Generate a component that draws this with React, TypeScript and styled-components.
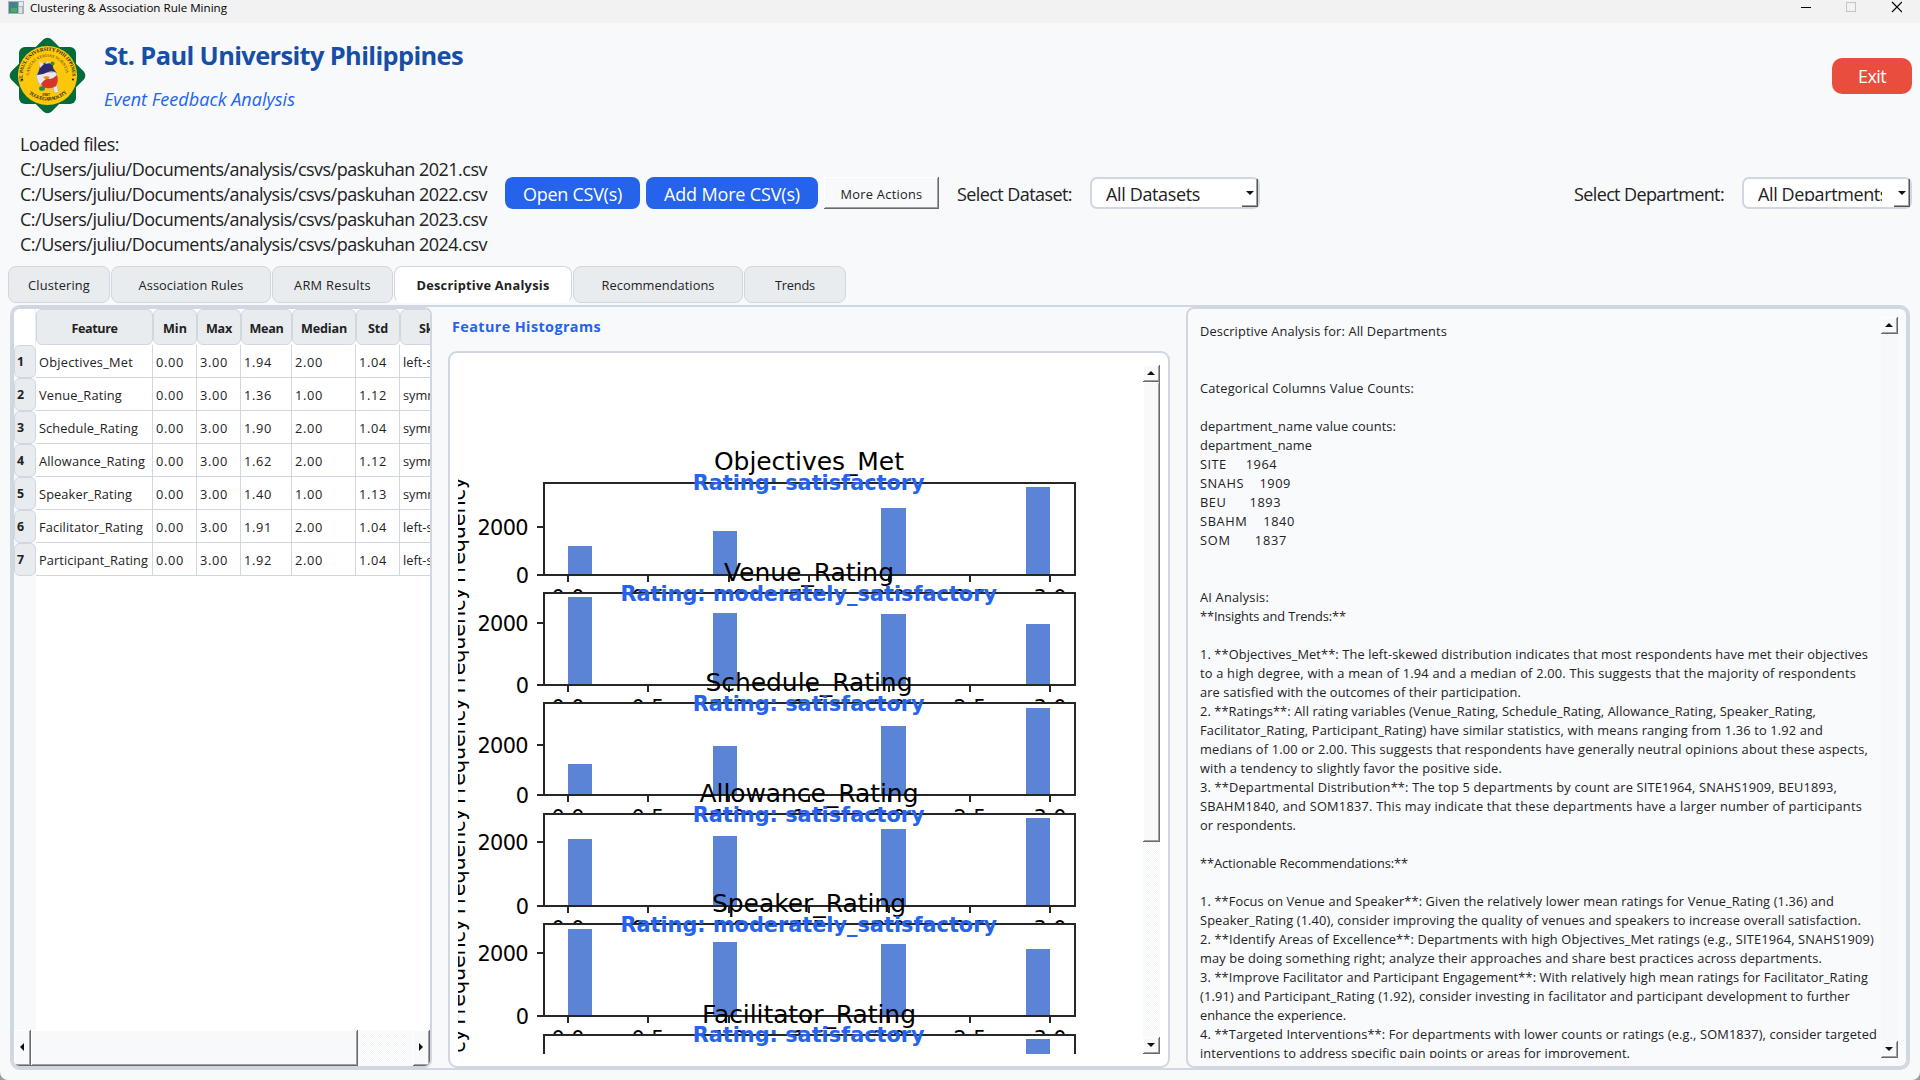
import React, { useLayoutEffect, useRef, useState } from 'react';
import styled, { createGlobalStyle, css } from 'styled-components';

const line = '#d0d7e0';
const ink = '#222222';
const surface = '#f7f9fb';

const Global = createGlobalStyle`
  * { box-sizing: border-box; }
  html, body { margin: 0; padding: 0; background: #9a9c9f; }
  body { font-family: 'Open Sans', 'Noto Sans', sans-serif; color: ${ink}; overflow: hidden; }
`;

/* ---------- text that keeps a fixed run length ---------- */

const Run = styled.span`
  display: inline-block;
  white-space: pre;
`;

function Fit({ w, children }: { w: number; children: string }) {
  const ref = useRef<HTMLSpanElement>(null);
  const [gap, setGap] = useState(0);
  useLayoutEffect(() => {
    const natural = ref.current!.getBoundingClientRect().width;
    setGap((w - natural) / children.length);
  }, [w, children]);
  return <Run ref={ref} style={{ letterSpacing: `${gap}px` }}>{children}</Run>;
}

/* ---------- window chrome ---------- */

const Window = styled.div`
  width: 1920px;
  height: 1080px;
  display: flex;
  flex-direction: column;
  background: ${surface};
  border-radius: 0 0 8px 8px;
  overflow: hidden;
`;

const TitleBar = styled.div`
  height: 23px;
  flex: none;
  display: flex;
  align-items: flex-start;
  background: #f2f2f2;
  color: #000;
  font-size: 11.6px;
  line-height: 16px;
  padding: 0 18px 0 8px;
`;

const TitleText = styled.div`
  margin: 0 auto 0 6px;
`;

const AppIcon = styled.svg`
  width: 16px;
  height: 13px;
  margin-top: 1px;
`;

const WindowButtons = styled.svg`
  width: 102px;
  height: 14px;
`;

/* ---------- heading ---------- */

const Header = styled.header`
  height: 108px;
  flex: none;
  display: flex;
  padding: 14px 8px 0 9px;
`;

const Logo = styled.svg`
  width: 77px;
  height: 77px;
`;

const Headings = styled.div`
  margin-left: 18px;
  display: flex;
  flex-direction: column;
`;

const Title = styled.h1`
  margin: 1px 0 0;
  font-size: 25.4px;
  line-height: 35px;
  font-weight: 700;
  color: #174ea6;
`;

const Subtitle = styled.div`
  margin-top: 14px;
  font-size: 18px;
  line-height: 25px;
  font-style: italic;
  color: #2563eb;
`;

const ExitButton = styled.button`
  margin: 21px 0 0 auto;
  width: 80px;
  height: 36px;
  border: 0;
  border-radius: 10px;
  background: #e94d3d;
  color: #fff;
  font: 18px/35px 'Open Sans', sans-serif;
  padding: 1px 0 0;
`;

/* ---------- toolbar ---------- */

const Toolbar = styled.div`
  height: 125px;
  flex: none;
  display: flex;
  align-items: center;
  padding: 0 8px 0 20px;
  font-size: 18px;
  line-height: 25px;
`;

const Files = styled.div`
  width: 485px;
  padding-top: 1px;
  div { height: 25px; }
`;

const PrimaryButton = styled.button<{ $w: number }>`
  width: ${p => p.$w}px;
  height: 32px;
  margin: 0 6px 1px 0;
  border: 0;
  border-radius: 8px;
  background: #2563eb;
  color: #fff;
  font: 18px/30px 'Open Sans', sans-serif;
  padding: 2px 0 0;
`;

const bevel = css`
  border: 0;
  background: ${surface};
  box-shadow: inset -1px -1px #696969, inset 1px 1px #fff, inset -2px -2px #a0a0a0;
`;

const MenuButton = styled.button`
  ${bevel}
  width: 115px;
  height: 32px;
  margin: 0 18px 1px 0;
  color: ${ink};
  font: 12.8px/30px 'Open Sans', sans-serif;
  padding: 1px 0 0;
`;

const Label = styled.div<{ $right?: boolean }>`
  margin-right: 18px;
  margin-left: ${p => (p.$right ? 'auto' : '0')};
  padding-top: 2px;
`;

const Combo = styled.div`
  width: 170px;
  height: 32px;
  margin-bottom: 1px;
  display: flex;
  border: 2px solid ${line};
  border-radius: 7px;
  background: #fff;
`;

const ComboText = styled.div`
  width: 124px;
  height: 22px;
  margin: 0 auto 0 14px;
  overflow: hidden;
  padding-top: 3px;
  white-space: nowrap;
`;

const TallComboText = styled(ComboText)`
  height: 28px;
`;

const Arrow = styled.i<{ $dir: 'up' | 'down' | 'left' | 'right' }>`
  width: 0;
  height: 0;
  border: 4px solid transparent;
  ${p => p.$dir === 'up' && 'border-top: 0; border-bottom-color: #111;'}
  ${p => p.$dir === 'down' && 'border-bottom: 0; border-top-color: #111;'}
  ${p => p.$dir === 'left' && 'border-left: 0; border-right-color: #111;'}
  ${p => p.$dir === 'right' && 'border-right: 0; border-left-color: #111;'}
`;

const ComboDrop = styled.div`
  width: 16px;
  height: 28px;
  display: flex;
  align-items: center;
  justify-content: center;
  box-shadow: inset -1px -1px #555, inset -2px -2px #a0a0a0;
`;

/* ---------- tabs ---------- */

const Tabs = styled.nav`
  height: 49px;
  flex: none;
  display: flex;
  gap: 1px;
  padding: 10px 0 0 8px;
`;

const Tab = styled.div<{ $w: number; $active?: boolean }>`
  width: ${p => p.$w}px;
  height: 37px;
  border: 1px solid ${line};
  border-radius: 8px;
  background: #e9ecef;
  font-size: 12.8px;
  line-height: 37px;
  text-align: center;
  ${p => p.$active && 'background: #fff; font-weight: 700; border-bottom-color: #fff;'}
`;

/* ---------- panes ---------- */

const Pane = styled.main`
  width: 1900px;
  height: 765px;
  flex: none;
  margin-left: 10px;
  display: flex;
  border: 2px solid ${line};
  border-radius: 10px;
`;

const TablePanel = styled.section`
  width: 420px;
  height: 761px;
  display: flex;
  flex-direction: column;
  border: 2px solid ${line};
  border-radius: 8px;
  overflow: hidden;
`;

const TableBody = styled.div`
  flex: 1;
  display: flex;
  flex-direction: column;
  overflow: hidden;
  background: linear-gradient(to right, ${surface} 22px, #fff 22px);
`;

const HeadRow = styled.div`
  display: flex;
  flex: none;
  height: 36px;
`;

const Corner = styled.div`
  width: 22px;
  flex: none;
  background: #fff;
  border-right: 1px solid #e9ecef;
`;

const HeadCell = styled.div<{ $w: number }>`
  width: ${p => p.$w}px;
  flex: none;
  border: 1px solid ${line};
  border-radius: 6px;
  background: #e9ecef;
  font-weight: 700;
  font-size: 12.6px;
  line-height: 37px;
  text-align: center;
`;

const Row = styled.div`
  display: flex;
  flex: none;
  height: 33px;
  font-size: 12.8px;
  line-height: 34px;
`;

const RowHead = styled.div`
  width: 22px;
  flex: none;
  border: 1px solid ${line};
  border-radius: 6px;
  background: #e9ecef;
  font-weight: 700;
  font-size: 12.4px;
  padding-left: 2px;
  line-height: 32px;
`;

const Cell = styled.div<{ $w: number }>`
  width: ${p => p.$w}px;
  flex: none;
  padding-left: 3px;
  border-right: 1px solid ${line};
  border-bottom: 1px solid ${line};
  background: #fff;
  white-space: nowrap;
`;

const hatch = css`
  background: repeating-conic-gradient(#f3f6f9 0 25%, #fff 0 50%) 0 0 / 2px 2px;
`;

const HBar = styled.div`
  height: 36px;
  flex: none;
  display: flex;
  ${hatch}
`;

const BarButton = styled.div<{ $w: number; $h: number }>`
  ${bevel}
  width: ${p => p.$w}px;
  height: ${p => p.$h}px;
  flex: none;
  display: flex;
  align-items: center;
  justify-content: center;
  padding: 0 2px 2px 0;
`;

const Spacer = styled.div`
  flex: 1;
`;

const ChartPanel = styled.section`
  width: 722px;
  margin-left: 16px;
  display: flex;
  flex-direction: column;
`;

const ChartHeading = styled.h2`
  margin: 0;
  height: 44px;
  padding: 6px 0 0 4px;
  font-size: 14.4px;
  line-height: 28px;
  font-weight: 700;
  color: #2563eb;
`;

const ChartFrame = styled.div`
  height: 717px;
  display: flex;
  border: 2px solid ${line};
  border-radius: 9px;
  background: #fff;
  padding: 12px 8px 12px 8px;
`;

const Plot = styled.svg`
  width: 685px;
  height: 689px;
  font-family: 'DejaVu Sans', sans-serif;
  flex: none;
`;

const VBar = styled.div<{ $plain?: boolean }>`
  width: 17px;
  flex: none;
  display: flex;
  flex-direction: column;
  ${p => (p.$plain ? 'background: #f7f8fb;' : hatch)}
`;

const ReportPanel = styled.section`
  width: 722px;
  height: 761px;
  margin-left: 16px;
  display: flex;
  border: 2px solid ${line};
  border-radius: 8px;
  background: #f9fafc;
  padding: 8px 8px;
`;

const Report = styled.div`
  width: 685px;
  height: 741px;
  overflow: hidden;
  padding: 5px 0 0 4px;
  font-size: 12.8px;
`;

const ReportLine = styled.div`
  height: 19px;
  line-height: 19px;
`;

/* ---------- data ---------- */

const files = ['2021', '2022', '2023', '2024'];

const tabs: [string, number, number, boolean?][] = [
  ['Clustering', 102, 62],
  ['Association Rules', 160, 105],
  ['ARM Results', 121, 77],
  ['Descriptive Analysis', 178, 133, true],
  ['Recommendations', 170, 113],
  ['Trends', 102, 40],
];

const columns: [string, number, number][] = [
  ['Feature', 117, 46], ['Min', 44, 24], ['Max', 44, 26], ['Mean', 51, 34],
  ['Median', 64, 46], ['Std', 44, 20], ['Skewness', 98, 60],
];

const rows: [string, number, string, string, string, string][] = [
  ['Objectives_Met', 94, '1.94', '2.00', '1.04', 'left-skewed'],
  ['Venue_Rating', 83, '1.36', '1.00', '1.12', 'symmetric'],
  ['Schedule_Rating', 99, '1.90', '2.00', '1.04', 'symmetric'],
  ['Allowance_Rating', 106, '1.62', '2.00', '1.12', 'symmetric'],
  ['Speaker_Rating', 93, '1.40', '1.00', '1.13', 'symmetric'],
  ['Facilitator_Rating', 104, '1.91', '2.00', '1.04', 'left-skewed'],
  ['Participant_Rating', 109, '1.92', '2.00', '1.04', 'left-skewed'],
];

type Axes = { name: string; w: number; rating: string; top: number; tick: number; bars: number[] };
const axes: Axes[] = [
  { name: 'Objectives_Met', w: 188, rating: 'satisfactory', top: 483, tick: 527, bars: [546, 531, 508, 487] },
  { name: 'Venue_Rating', w: 168, rating: 'moderately_satisfactory', top: 593, tick: 623, bars: [597, 613, 614, 624] },
  { name: 'Schedule_Rating', w: 205, rating: 'satisfactory', top: 703, tick: 745, bars: [764, 746, 726, 708] },
  { name: 'Allowance_Rating', w: 217, rating: 'satisfactory', top: 814, tick: 842, bars: [839, 836, 829, 818] },
  { name: 'Speaker_Rating', w: 192, rating: 'moderately_satisfactory', top: 924, tick: 953, bars: [929, 942, 944, 949] },
  { name: 'Facilitator_Rating', w: 212, rating: 'satisfactory', top: 1035, tick: 1080, bars: [1097, 1080, 1060, 1039] },
];
const firstTop = 483;
const pitch = 110.45;
const barX: [number, number][] = [[568, 24], [713, 24], [881, 25], [1026, 24]];
const xTicks: [string, number][] = [
  ['0.0', 568], ['0.5', 648], ['1.0', 729], ['1.5', 809], ['2.0', 889], ['2.5', 970], ['3.0', 1050],
];

const report: [string, number][] = [
  ['Descriptive Analysis for: All Departments', 247],
  ['', 0], ['', 0],
  ['Categorical Columns Value Counts:', 214],
  ['', 0],
  ['department_name value counts:', 196],
  ['department_name', 112],
  ['SITE     1964', 77],
  ['SNAHS    1909', 91],
  ['BEU      1893', 81],
  ['SBAHM    1840', 95],
  ['SOM      1837', 87],
  ['', 0], ['', 0],
  ['AI Analysis:', 69],
  ['**Insights and Trends:**', 146],
  ['', 0],
  ['1. **Objectives_Met**: The left-skewed distribution indicates that most respondents have met their objectives', 668],
  ['to a high degree, with a mean of 1.94 and a median of 2.00. This suggests that the majority of respondents', 656],
  ['are satisfied with the outcomes of their participation.', 321],
  ['2. **Ratings**: All rating variables (Venue_Rating, Schedule_Rating, Allowance_Rating, Speaker_Rating,', 616],
  ['Facilitator_Rating, Participant_Rating) have similar statistics, with means ranging from 1.36 to 1.92 and', 623],
  ['medians of 1.00 or 2.00. This suggests that respondents have generally neutral opinions about these aspects,', 668],
  ['with a tendency to slightly favor the positive side.', 302],
  ['3. **Departmental Distribution**: The top 5 departments by count are SITE1964, SNAHS1909, BEU1893,', 637],
  ['SBAHM1840, and SOM1837. This may indicate that these departments have a larger number of participants', 662],
  ['or respondents.', 96],
  ['', 0],
  ['**Actionable Recommendations:**', 208],
  ['', 0],
  ['1. **Focus on Venue and Speaker**: Given the relatively lower mean ratings for Venue_Rating (1.36) and', 634],
  ['Speaker_Rating (1.40), consider improving the quality of venues and speakers to increase overall satisfaction.', 661],
  ['2. **Identify Areas of Excellence**: Departments with high Objectives_Met ratings (e.g., SITE1964, SNAHS1909)', 674],
  ['may be doing something right; analyze their approaches and share best practices across departments.', 622],
  ['3. **Improve Facilitator and Participant Engagement**: With relatively high mean ratings for Facilitator_Rating', 668],
  ['(1.91) and Participant_Rating (1.92), consider investing in facilitator and participant development to further', 650],
  ['enhance the experience.', 146],
  ['4. **Targeted Interventions**: For departments with lower counts or ratings (e.g., SOM1837), consider targeted', 677],
  ['interventions to address specific pain points or areas for improvement.', 430],
];

/* ---------- drawings ---------- */

function Seal() {
  return (
    <Logo viewBox="0 0 77 77">
      <defs>
        <path id="arcTop" d="M15.2 47 A24.8 24.8 0 1 1 61.8 47" />
        <path id="arcIn" d="M19.8 38.5 A18.7 18.7 0 1 1 57.2 38.5" />
        <path id="arcLow" d="M17 53.5 A28 28 0 0 0 60 53.5" />
      </defs>
      <g fill="#046a38">
        <rect x="10" y="10" width="57" height="57" rx="6" />
        <rect x="10" y="10" width="57" height="57" rx="6" transform="rotate(45 38.5 38.5)" />
      </g>
      <circle cx="38.5" cy="38.5" r="29.6" fill="#fdc70c" />
      <g fontFamily="Liberation Serif, serif" fontWeight="700" fill="#2b2508">
        <text fontSize="5"><textPath href="#arcTop" startOffset="3" textLength="84">ST. PAUL UNIVERSITY PHILIPPINES</textPath></text>
        <text fontSize="4" fontWeight="400"><textPath href="#arcIn" textLength="56">CARITAS VERITAS SCIENTIA</textPath></text>
        <text fontSize="5"><textPath href="#arcLow" startOffset="4" textLength="42">TUGUEGARAO CITY</textPath></text>
        <text x="33" y="59" fontSize="4">1907</text>
      </g>
      <circle cx="13" cy="42.5" r="1.1" fill="#222" />
      <circle cx="64" cy="42.5" r="1.1" fill="#222" />
      <path d="M44 48 L48 48 L49.5 55 L45.5 56 Z" fill="#e8e6f2" stroke="#aaa" strokeWidth=".5" />
      <path d="M28 36 L47 35 Q50 42 47 49 Q42 53 35 50 Q26 46 28 36Z" fill="#e6e7f1" stroke="#a9adc6" strokeWidth=".6" />
      <path d="M28 38 Q31 32 31 28 L38 25 L44 28 Q43 31 48 36 Q44 33 39 35 Q34 38 28 38Z" fill="#2d2a6e" />
      <path d="M30 24 L35 27 L31 31Z M38 24 L41 26 L36 27Z" fill="#dfe1ec" />
      <path d="M32 47 Q36 41 41 42 Q45 41 48 38 Q50 44 47 49 Q41 53 34 50Z" fill="#d8352a" />
      <path d="M34 40 l4 -1 3 1 -2 2 -3 0Z" fill="#e88c1a" />
      <circle cx="43.5" cy="26.5" r="2" fill="#238b45" />
      <ellipse cx="33" cy="51.5" rx="3" ry="2.3" fill="#238b45" />
    </Logo>
  );
}

function Histograms() {
  return (
    <Plot viewBox="458 365 685 689">
      {axes.map((a, n) => {
        const bottom = a.top + 92;
        const exact = firstTop + n * pitch;
        return (
          <g key={a.name}>
            <rect x="544" y={a.top} width="531" height="92" fill="#fff" />
            {a.bars.map((y, i) => (
              <rect key={i} x={barX[i][0]} y={y} width={barX[i][1]} height={bottom - y} fill="#5b84d7" />
            ))}
            <g stroke="#262626" strokeWidth="2" fill="none">
              {xTicks.map(([t, x]) => <path key={t} d={`M${x} ${bottom}v7`} />)}
              <path d={`M544 ${a.tick}h-7M544 ${bottom}h-7`} />
              <rect x="544" y={a.top} width="531" height="92" />
            </g>
            <g fontSize="20.83" fill="#000">
              {xTicks.map(([t, x]) => <text key={t} x={x} y={bottom + 29.5} textAnchor="middle">{t}</text>)}
              <text x="477.5" y={a.tick + 8} textLength="51">2000</text>
              <text x="529" y={bottom + 8} textAnchor="end">0</text>
              <text transform={`translate(465 ${exact + 47}) rotate(-90)`} textAnchor="middle" textLength="106">Frequency</text>
            </g>
            <text x="809" y={exact - 12.6} fontSize="25" textAnchor="middle" textLength={a.w + 2}>{a.name}</text>
            <text x="808.7" y={exact + 7.2} fontSize="20.83" fontWeight="700" fill="#2563eb" textAnchor="middle">
              {`Rating: ${a.rating}`}
            </text>
          </g>
        );
      })}
    </Plot>
  );
}

/* ---------- page ---------- */

export default function App() {
  return (
    <Window>
      <Global />
      <TitleBar>
        <AppIcon viewBox="0 0 16 13">
          <rect width="16" height="13" fill="#a9b4b8" />
          <rect x="1" y="1" width="9" height="11" fill="#3f8a80" />
          <path d="M1 1h5v4h-5z" fill="#4a78a8" />
          <path d="M3 7h6v4h-6z" fill="#4fa968" />
          <rect x="11" y="1" width="4" height="4" fill="#e8ecec" />
          <rect x="11" y="6" width="3" height="6" fill="#dde4e2" />
        </AppIcon>
        <TitleText><Fit w={197}>Clustering &amp; Association Rule Mining</Fit></TitleText>
        <WindowButtons viewBox="0 0 102 14" fill="none" strokeWidth="1">
          <path d="M1 7.5h10" stroke="#000" />
          <rect x="46.5" y="2.5" width="9" height="9" stroke="#c4c4c4" />
          <path d="M92 2l10 10M102 2l-10 10" stroke="#000" strokeWidth="1.2" />
        </WindowButtons>
      </TitleBar>

      <Header>
        <Seal />
        <Headings>
          <Title><Fit w={359}>St. Paul University Philippines</Fit></Title>
          <Subtitle><Fit w={191}>Event Feedback Analysis</Fit></Subtitle>
        </Headings>
        <ExitButton><Fit w={28}>Exit</Fit></ExitButton>
      </Header>

      <Toolbar>
        <Files>
          <div><Fit w={99}>Loaded files:</Fit></div>
          {files.map(y => (
            <div key={y}><Fit w={467}>{`C:/Users/juliu/Documents/analysis/csvs/paskuhan ${y}.csv`}</Fit></div>
          ))}
        </Files>
        <PrimaryButton $w={135}><Fit w={99}>Open CSV(s)</Fit></PrimaryButton>
        <PrimaryButton $w={172}><Fit w={136}>Add More CSV(s)</Fit></PrimaryButton>
        <MenuButton><Fit w={82}>More Actions</Fit></MenuButton>
        <Label><Fit w={115}>Select Dataset:</Fit></Label>
        <Combo>
          <TallComboText><Fit w={94}>All Datasets</Fit></TallComboText>
          <ComboDrop><Arrow $dir="down" /></ComboDrop>
        </Combo>
        <Label $right><Fit w={150}>Select Department:</Fit></Label>
        <Combo>
          <ComboText><Fit w={130}>All Departments</Fit></ComboText>
          <ComboDrop><Arrow $dir="down" /></ComboDrop>
        </Combo>
      </Toolbar>

      <Tabs>
        {tabs.map(([name, w, tw, active]) => (
          <Tab key={name} $w={w} $active={active}><Fit w={tw}>{name}</Fit></Tab>
        ))}
      </Tabs>

      <Pane>
        <TablePanel>
          <TableBody>
            <HeadRow>
              <Corner />
              {columns.map(([name, w, tw]) => (
                <HeadCell key={name} $w={w}><Fit w={tw}>{name}</Fit></HeadCell>
              ))}
            </HeadRow>
            {rows.map(([name, tw, mean, median, std, skew], i) => (
              <Row key={name}>
                <RowHead>{i + 1}</RowHead>
                <Cell $w={117}><Fit w={tw}>{name}</Fit></Cell>
                <Cell $w={44}><Fit w={28}>0.00</Fit></Cell>
                <Cell $w={44}><Fit w={28}>3.00</Fit></Cell>
                <Cell $w={51}><Fit w={28}>{mean}</Fit></Cell>
                <Cell $w={64}><Fit w={28}>{median}</Fit></Cell>
                <Cell $w={44}><Fit w={28}>{std}</Fit></Cell>
                <Cell $w={98}>{skew}</Cell>
              </Row>
            ))}
          </TableBody>
          <HBar>
            <BarButton $w={17} $h={36}><Arrow $dir="left" /></BarButton>
            <BarButton $w={327} $h={36} />
            <Spacer />
            <BarButton $w={17} $h={36}><Arrow $dir="right" /></BarButton>
          </HBar>
        </TablePanel>

        <ChartPanel>
          <ChartHeading><Fit w={149}>Feature Histograms</Fit></ChartHeading>
          <ChartFrame>
            <Histograms />
            <VBar>
              <BarButton $w={17} $h={17}><Arrow $dir="up" /></BarButton>
              <BarButton $w={17} $h={460} />
              <Spacer />
              <BarButton $w={17} $h={17}><Arrow $dir="down" /></BarButton>
            </VBar>
          </ChartFrame>
        </ChartPanel>

        <ReportPanel>
          <Report>
            {report.map(([text, w], i) => (
              <ReportLine key={i}>{text && <Fit w={w}>{text}</Fit>}</ReportLine>
            ))}
          </Report>
          <VBar $plain>
            <BarButton $w={17} $h={17}><Arrow $dir="up" /></BarButton>
            <Spacer />
            <BarButton $w={17} $h={17}><Arrow $dir="down" /></BarButton>
          </VBar>
        </ReportPanel>
      </Pane>
    </Window>
  );
}
